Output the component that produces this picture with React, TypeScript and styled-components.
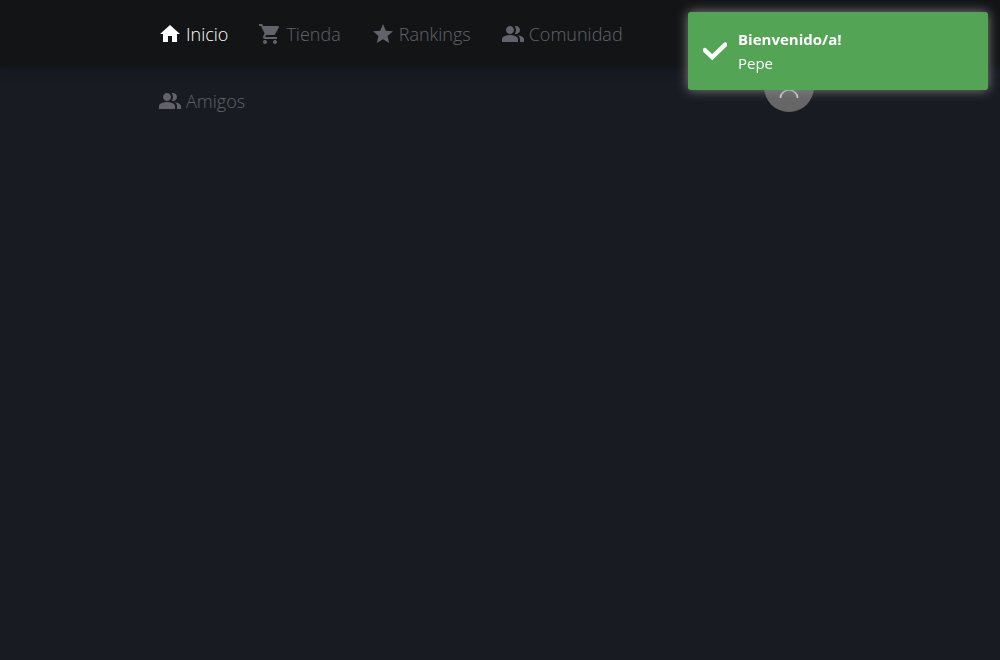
import React from "react";
import styled, { createGlobalStyle } from "styled-components";

const GlobalStyle = createGlobalStyle`
  *, *::before, *::after { box-sizing: border-box; }
  body {
    margin: 0;
    min-height: 100vh;
    background: #181b22;
    font-family: "Segoe UI", "Open Sans", "Noto Sans", sans-serif;
    font-size: 16px;
    line-height: 24px;
  }
`;

const Header = styled.header`
  height: 67px;
  background: #131416;
  box-shadow: 0 0 10px rgba(10, 12, 16, 0.6);
`;

const Container = styled.nav`
  display: flex;
  align-items: flex-end;
  justify-content: space-between;
  width: 72%;
  margin: 0 auto;
  padding: 0 46px 0 18px;
`;

const NavList = styled.ul`
  display: flex;
  flex: 0 1 500px;
  flex-wrap: wrap;
  column-gap: 30px;
  margin: 0;
  padding: 0;
  list-style: none;
`;

const NavLink = styled.a<{ $active?: boolean }>`
  display: flex;
  align-items: center;
  gap: 4px;
  height: 67px;
  color: ${(p) => (p.$active ? "#ffffff" : "#62626b")};
  font-size: 18px;
  font-weight: 300;
  text-decoration: none;
`;

const NavIcon = styled.svg`
  width: 24px;
  height: 24px;
  fill: currentColor;
`;

const Avatar = styled.button`
  display: flex;
  align-items: center;
  justify-content: center;
  width: 50px;
  height: 50px;
  margin: 0 0 22px;
  padding: 0;
  border: 0;
  border-radius: 50%;
  background: #666666;
  color: #d8d8d8;
`;

const Toast = styled.div`
  position: fixed;
  top: 12px;
  right: 12px;
  display: flex;
  align-items: center;
  gap: 11px;
  width: 300px;
  padding: 15px;
  border-radius: 3px;
  background: #53a555;
  box-shadow: 0 0 12px #858585;
  color: #ffffff;
`;

const ToastTitle = styled.strong`
  display: block;
  font-size: 15px;
  font-weight: 700;
`;

const ToastMessage = styled.span`
  display: block;
  font-size: 15px;
`;

const people =
  "M16.67 13.13C18.04 14.06 19 15.32 19 17v3h4v-3c0-2.18-3.57-3.47-6.33-3.87zM15 12c2.21 0 4-1.79 4-4s-1.79-4-4-4c-.47 0-.91.1-1.33.24C14.5 5.27 15 6.58 15 8s-.5 2.73-1.33 3.76c.42.14.86.24 1.33.24zM9 12c2.21 0 4-1.79 4-4s-1.79-4-4-4-4 1.79-4 4 1.79 4 4 4zM9 13c-2.67 0-8 1.34-8 4v3h16v-3c0-2.66-5.33-4-8-4z";

const items = [
  { label: "Inicio", active: true, path: "M10 20v-6h4v6h5v-8h3L12 3 2 12h3v8z" },
  {
    label: "Tienda",
    path: "M7 18c-1.1 0-1.99.9-1.99 2S5.9 22 7 22s2-.9 2-2-.9-2-2-2zM1 2v2h2l3.6 7.59-1.35 2.45c-.16.28-.25.61-.25.96 0 1.1.9 2 2 2h12v-2H7.42c-.14 0-.25-.11-.25-.25l.03-.12.9-1.63h7.45c.75 0 1.41-.41 1.75-1.03l3.58-6.49c.08-.14.12-.31.12-.48 0-.55-.45-1-1-1H5.21l-.94-2H1zm16 16c-1.1 0-1.99.9-1.99 2s.89 2 1.99 2 2-.9 2-2-.9-2-2-2z",
  },
  { label: "Rankings", path: "M12 17.27 18.18 21l-1.64-7.03L22 9.24l-7.19-.61L12 2 9.19 8.63 2 9.24l5.46 4.73L5.82 21z" },
  { label: "Comunidad", path: people },
  { label: "Amigos", path: people },
];

export default function App() {
  return (
    <>
      <GlobalStyle />
      <Header>
        <Container>
          <NavList>
            {items.map((item) => (
              <li key={item.label}>
                <NavLink href="#" $active={item.active}>
                  <NavIcon viewBox="0 0 24 24" aria-hidden="true">
                    <path d={item.path} />
                  </NavIcon>
                  {item.label}
                </NavLink>
              </li>
            ))}
          </NavList>
          <Avatar type="button" aria-label="Perfil">
            <svg width="24" height="24" viewBox="0 0 24 24" fill="none" stroke="currentColor" strokeWidth="1.5" aria-hidden="true">
              <circle cx="12" cy="7" r="5" />
              <path d="M3.4 23a8.6 8 0 0 1 17.2 0" />
            </svg>
          </Avatar>
        </Container>
      </Header>
      <Toast role="status">
        <svg width="24" height="24" viewBox="0 0 24 24" aria-hidden="true">
          <path d="M1.8 11.2 9.2 18.2 22.2 5.6" fill="none" stroke="#ffffff" strokeWidth="4.4" strokeLinecap="round" />
        </svg>
        <div>
          <ToastTitle>Bienvenido/a!</ToastTitle>
          <ToastMessage>Pepe</ToastMessage>
        </div>
      </Toast>
    </>
  );
}
